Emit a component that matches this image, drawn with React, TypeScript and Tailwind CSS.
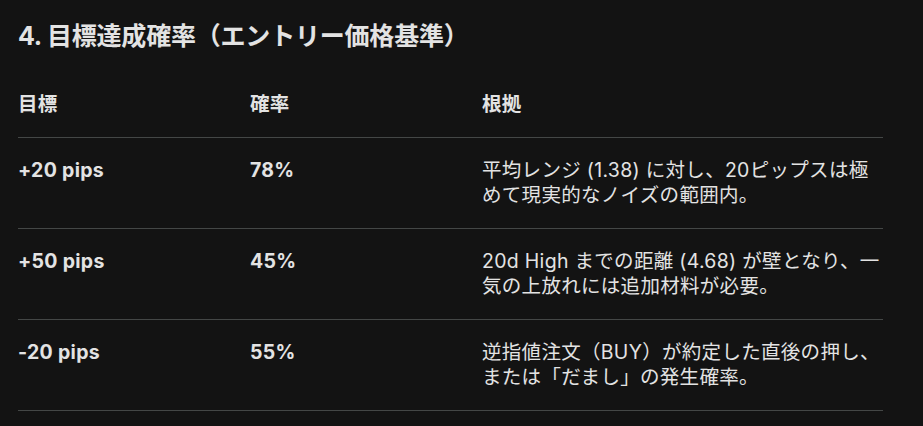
import React from "react";

type Row = {
  target: string;
  prob: string;
  basis: string;
};

const rows: Row[] = [
  {
    target: "+20 pips",
    prob: "78%",
    basis: "平均レンジ (1.38) に対し、20ピップスは極めて現実的なノイズの範囲内。",
  },
  {
    target: "+50 pips",
    prob: "45%",
    basis: "20d High までの距離 (4.68) が壁となり、一気の上放れには追加材料が必要。",
  },
  {
    target: "-20 pips",
    prob: "55%",
    basis: "逆指値注文（BUY）が約定した直後の押し、または「だまし」の発生確率。",
  },
];

const App: React.FC = () => {
  return (
    <div
      className="min-h-screen w-full bg-[#131313] text-[#e3e3e3] pl-[18px] pr-[40px] pt-[19px]"
      style={{ fontFamily: '"Inter", "Noto Sans CJK JP", sans-serif' }}
    >
      {/* Title */}
      <h2 className="text-[25px] leading-[34px] font-bold tracking-[-0.2px]">
        4. 目標達成確率（エントリー価格基準）
      </h2>

      {/* Table */}
      <table className="mt-[19px] w-[865px] table-fixed border-collapse text-[19.5px] leading-[25px] tracking-[0.3px]">
        <thead>
          <tr className="border-b border-[#444746]">
            <th className="w-[232px] py-[20px] text-left font-bold">目標</th>
            <th className="w-[232px] py-[20px] text-left font-bold">確率</th>
            <th className="py-[20px] text-left font-bold">根拠</th>
          </tr>
        </thead>
        <tbody>
          {rows.map((row) => (
            <tr key={row.target} className="border-b border-[#444746]">
              <td className="py-[20px] align-top font-bold">{row.target}</td>
              <td className="py-[20px] align-top font-bold">{row.prob}</td>
              <td className="py-[20px] align-top">{row.basis}</td>
            </tr>
          ))}
        </tbody>
      </table>
    </div>
  );
};

export default App;
